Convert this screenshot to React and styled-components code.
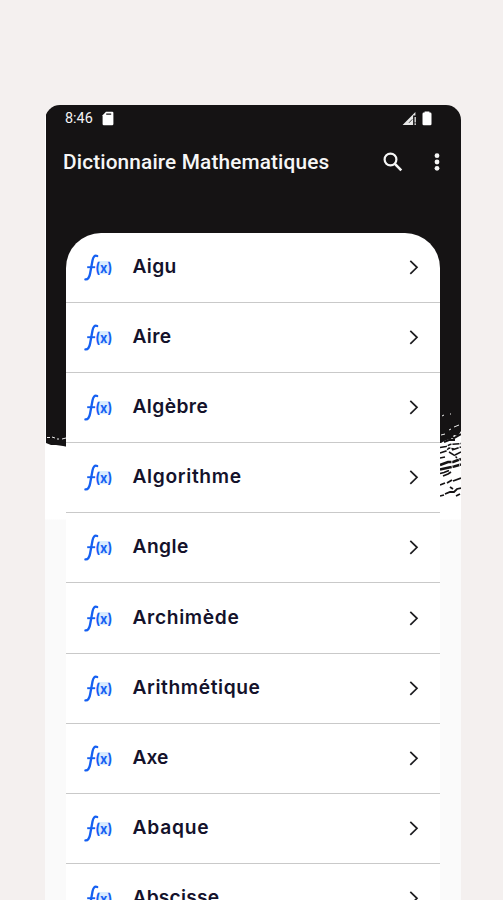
import React from "react";
import styled, { createGlobalStyle } from "styled-components";

const GlobalStyle = createGlobalStyle`
  * {
    box-sizing: border-box;
  }
  body {
    margin: 0;
    background: #f4f0ef;
  }
`;

const Page = styled.div`
  height: 900px;
  padding: 105px 42px 0 45px;
  overflow: hidden;
  background: #f4f0ef;
`;

const Phone = styled.main`
  position: relative;
  height: 820px;
  border-radius: 15px 15px 0 0;
  overflow: hidden;
  background: linear-gradient(#ffffff 414px, #fafafa 415px);
`;

const Brush = styled.svg`
  position: absolute;
  top: 0;
  left: 0;
  display: block;
`;

const Content = styled.div`
  position: relative;
`;

const StatusBar = styled.div`
  display: flex;
  align-items: center;
  height: 27px;
  padding: 0 29px 0 20px;
  color: #f4f4f4;
  font: 400 14.4px/27px Roboto, sans-serif;
`;

const Clock = styled.span`
  flex: 0 0 37px;
`;

const Signals = styled.div`
  display: flex;
  align-items: center;
  gap: 5px;
  margin-left: auto;
`;

const AppBar = styled.header`
  display: flex;
  align-items: center;
  height: 60px;
  margin-bottom: 41px;
  padding: 0 20px 0 18px;
  color: #f6f6f6;
`;

const Title = styled.h1`
  flex: 1;
  margin: 0;
  font: 500 20.8px/30px Roboto, sans-serif;
  letter-spacing: 0.14px;
  white-space: nowrap;
`;

const IconButton = styled.button`
  display: flex;
  margin: 0 0 1px ${({ $gap }) => $gap || 0}px;
  padding: 0;
  border: 0;
  background: none;
  color: inherit;
`;

const WordList = styled.ul`
  margin: 0 21px;
  padding: 0;
  list-style: none;
  border-radius: 35px 35px 0 0;
  background: #ffffff;
`;

const WordRow = styled.li`
  display: flex;
  align-items: center;
  height: 70.1px;
  padding: 0 20px 1px 18px;
  border-bottom: 1.5px solid #c9c9c9;
`;

const Word = styled.span`
  flex: 1;
  margin-left: 19.5px;
  padding-bottom: 2px;
  color: #14122b;
  font: 600 19.2px/28px Inter, sans-serif;
  letter-spacing: ${({ $tracking }) => $tracking}px;
`;

const FunctionSvg = styled.svg`
  overflow: visible;
`;

const FunctionIcon = () => (
  <FunctionSvg width="29" height="30" viewBox="0 0 29 30" fill="none">
    <rect x="13" y="9" width="13" height="13" rx="3" fill="#d9ecff" />
    <path
      d="M13.2 4C10.7 2.8 9.1 4.9 8.500 8.500L6.200 21C5.500 25.500 3.800 27.800 1.400 27.400"
      stroke="#1560f2"
      strokeWidth="2.3"
      strokeLinecap="round"
    />
    <path d="M3.2 15.2h8" stroke="#1560f2" strokeWidth="1.9" />
    <text
      x="11.2"
      y="20.600"
      fill="#1560f2"
      fontFamily="Inter, sans-serif"
      fontSize="14.500"
      fontWeight="700"
      textLength="17"
      lengthAdjust="spacingAndGlyphs"
    >
      (x)
    </text>
  </FunctionSvg>
);

const Chevron = () => (
  <svg width="12" height="16" viewBox="0 0 12 16" fill="none">
    <path d="M2.3 1.8 9 8.3 2.3 14.8" stroke="#1d1d20" strokeWidth="1.7" />
  </svg>
);

const SdCardIcon = () => (
  <svg width="12" height="15" viewBox="0 0 12 15">
    <path
      d="M4 .8h6.2q1.2 0 1.2 1.2v11q0 1.2-1.2 1.2H1.8Q.6 14.2 .6 13V4.2Z"
      fill="#ffffff"
    />
    <path d="M4.2 3.2h5" stroke="#151314" strokeWidth="1.3" />
  </svg>
);

const SignalIcon = () => (
  <svg width="15" height="15" viewBox="0 0 15 15">
    <path d="M.6 13.9 13.4 .9v3.6h-2.3v9.4Z" fill="#e8e8e8" />
    <path d="M7 11.8 10.3 8.3" stroke="#151314" strokeWidth=".8" />
    <path d="M13.2 6v5.5M13.2 12.3v1.6" stroke="#d8d8d8" strokeWidth="1.4" />
  </svg>
);

const BatteryIcon = () => (
  <svg width="10" height="15" viewBox="0 0 10 15">
    <path
      d="M2.6 .4h4.8v1.2h.8Q9.5 1.6 9.5 3v10q0 1.3-1.3 1.3H1.8Q.5 14.3 .5 13V3Q.5 1.6 1.8 1.6h.8Z"
      fill="#ffffff"
    />
  </svg>
);

const SearchIcon = () => (
  <svg width="20" height="20" viewBox="0 0 20 20" fill="none">
    <circle cx="7.5" cy="7.5" r="5.9" stroke="currentColor" strokeWidth="2.2" />
    <path d="m11.9 11.9 6.4 6.4" stroke="currentColor" strokeWidth="2.6" />
  </svg>
);

const MoreIcon = () => (
  <svg width="8" height="20" viewBox="0 0 8 20" fill="currentColor">
    <circle cx="4" cy="3.7" r="2.4" />
    <circle cx="4" cy="10" r="2.4" />
    <circle cx="4" cy="16.3" r="2.4" />
  </svg>
);

// dry brush stroke that fades out towards the bottom right
const Backdrop = () => (
  <Brush width="416" height="415" viewBox="0 0 416 415" fill="none">
    <path
      d="M1 0H416V326l-3 5-4-1-3 4-5 1-5 3H23v4l-5-1-7-1-5 0-5-2Z"
      fill="#151314"
    />
    <path
      d="M2 332.5h3M7 332l3 1M12 334h2M17 334l4-1M397 311l2-1M405 309h1M404 325l2-1M396 330l4-1M409 322l5-2M401 334l3-3"
      stroke="#eeeeee"
      strokeWidth="1"
    />
    <g stroke="#151314">
      <path
        d="M395 333l6 1 3-4 5 3 7-4M399 337l5-2 6 0"
        strokeWidth="2"
      />
      <path
        d="M395 342.5l6-1 4-2 11-1M395 348l6-2 3-3 5 1M404 347l5 3 3 3M407 345l9-3M410 350l6-3M395 353l5-1"
        strokeWidth="1.5"
        strokeDasharray="7 1 4 1"
      />
      <path
        d="M395 360l8-3 5 0 8-3M395 364.5l9-2 5-1 7-2"
        strokeWidth="2.6"
        strokeDasharray="12 .8 7 .6"
      />
      <path d="M395 368.5l4-1 5-2M398 371l5-2 3-2" strokeWidth="1.7" />
      <path
        d="M395 380l5-2M402 378l5-3M408 376l8-3M405 382l3 2"
        strokeWidth="1.8"
      />
      <path
        d="M395 391l4-1M400 389l5-2 4 0 3-3 4-1M411 391l4-2"
        strokeWidth="1.8"
      />
    </g>
  </Brush>
);

const words = [
  { label: "Aigu", tracking: 0.3 },
  { label: "Aire", tracking: 0.3 },
  { label: "Algèbre", tracking: 0.4 },
  { label: "Algorithme", tracking: 0.65 },
  { label: "Angle", tracking: 0.45 },
  { label: "Archimède", tracking: 0.65 },
  { label: "Arithmétique", tracking: 0.6 },
  { label: "Axe", tracking: 0 },
  { label: "Abaque", tracking: 0.8 },
  { label: "Abscisse", tracking: 0.2 },
];

const App = () => {
  return (
    <>
      <GlobalStyle />
      <Page>
        <Phone>
          <Backdrop />
          <Content>
            <StatusBar>
              <Clock>8:46</Clock>
              <SdCardIcon />
              <Signals>
                <SignalIcon />
                <BatteryIcon />
              </Signals>
            </StatusBar>
            <AppBar>
              <Title>Dictionnaire Mathematiques</Title>
              <IconButton aria-label="Rechercher">
                <SearchIcon />
              </IconButton>
              <IconButton aria-label="Plus" $gap={30}>
                <MoreIcon />
              </IconButton>
            </AppBar>
            <WordList>
              {words.map(({ label, tracking }) => (
                <WordRow key={label}>
                  <FunctionIcon />
                  <Word $tracking={tracking}>{label}</Word>
                  <Chevron />
                </WordRow>
              ))}
            </WordList>
          </Content>
        </Phone>
      </Page>
    </>
  );
};

export default App;
